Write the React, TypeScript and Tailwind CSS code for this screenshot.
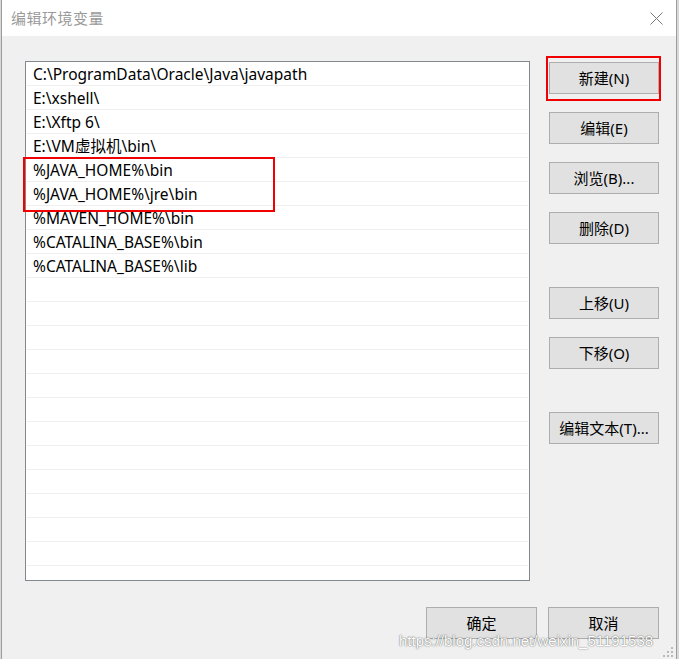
const entries = [
  'C:\\ProgramData\\Oracle\\Java\\javapath',
  'E:\\xshell\\',
  'E:\\Xftp 6\\',
  'E:\\VM虚拟机\\bin\\',
  '%JAVA_HOME%\\bin',
  '%JAVA_HOME%\\jre\\bin',
  '%MAVEN_HOME%\\bin',
  '%CATALINA_BASE%\\bin',
  '%CATALINA_BASE%\\lib',
];

const rows = [...entries, ...Array(14).fill('')];

const font = { fontFamily: '"Noto Sans", "Noto Sans CJK SC", sans-serif' };

function Btn({ label, className = '' }: { label: string; className?: string }) {
  return (
    <button
      className={`w-[110px] h-[32px] bg-[#e1e1e1] border border-[#adadad] text-[15px] text-black flex items-center justify-center ${className}`}
    >
      {label}
    </button>
  );
}

export default function App() {
  return (
    <div className="relative w-[679px] h-[659px] overflow-hidden bg-[#d9d9d9]" style={font}>
      <div className="ml-[1px] w-[676px] h-[659px] border-x border-[#9c9c9c] flex flex-col">
        {/* title bar */}
        <div className="h-[36px] bg-white flex items-center justify-between pl-[9px] pr-[13px]">
          <span className="text-[15px] text-[#9a9a9a] tracking-[0.5px]">编辑环境变量</span>
          <svg width="13" height="13" viewBox="0 0 13 13">
            <path d="M0.5 0.5 L12.5 12.5 M12.5 0.5 L0.5 12.5" stroke="#7a7a7a" strokeWidth="1" />
          </svg>
        </div>

        {/* body */}
        <div className="flex-1 bg-[#f0f0f0] flex flex-col">
          <div className="flex mt-[25px]">
            <div className="ml-[23px] w-[505px] h-[520px] border border-[#828790] bg-white overflow-hidden">
              {rows.map((r, i) => (
                <div
                  key={i}
                  className="h-[24px] mx-[1px] border-b border-[#efefef] flex items-center pl-[6px] pt-[3px] text-[15.5px] text-black leading-none whitespace-nowrap"
                >
                  {r}
                </div>
              ))}
            </div>

            <div className="ml-[19px] mt-[1px] flex flex-col">
              <Btn label="新建(N)" />
              <Btn label="编辑(E)" className="mt-[18px]" />
              <Btn label="浏览(B)..." className="mt-[18px]" />
              <Btn label="删除(D)" className="mt-[18px]" />
              <Btn label="上移(U)" className="mt-[43px]" />
              <Btn label="下移(O)" className="mt-[18px]" />
              <Btn label="编辑文本(T)..." className="mt-[43px]" />
            </div>
          </div>

          <div className="flex mt-[26px] ml-[424px] gap-[11px]">
            <Btn label="确定" className="w-[111px]" />
            <Btn label="取消" className="w-[111px]" />
          </div>
        </div>
      </div>

      {/* red highlight boxes */}
      <div className="absolute left-[23px] top-[157px] w-[252px] h-[55px] border-2 border-[#f00000]" />
      <div className="absolute left-[546px] top-[56px] w-[115px] h-[45px] border-2 border-[#f00000]" />

      {/* watermark */}
      <div
        className="absolute left-[399px] top-[630px] text-[15px] text-white whitespace-nowrap [text-shadow:0_0_1px_rgba(0,0,0,0.55),0_0_2px_rgba(0,0,0,0.35)]"
        style={{ fontFamily: '"Liberation Sans", Arial, sans-serif' }}
      >
        https://blog.csdn.net/weixin_51191538
      </div>

      {/* size grip */}
      <svg className="absolute left-[663px] top-[647px]" width="12" height="12" viewBox="0 0 12 12">
        <g fill="#b8b8b8">
          <rect x="8" y="0" width="2" height="2" />
          <rect x="4" y="4" width="2" height="2" />
          <rect x="8" y="4" width="2" height="2" />
          <rect x="0" y="8" width="2" height="2" />
          <rect x="4" y="8" width="2" height="2" />
          <rect x="8" y="8" width="2" height="2" />
        </g>
      </svg>
    </div>
  );
}
